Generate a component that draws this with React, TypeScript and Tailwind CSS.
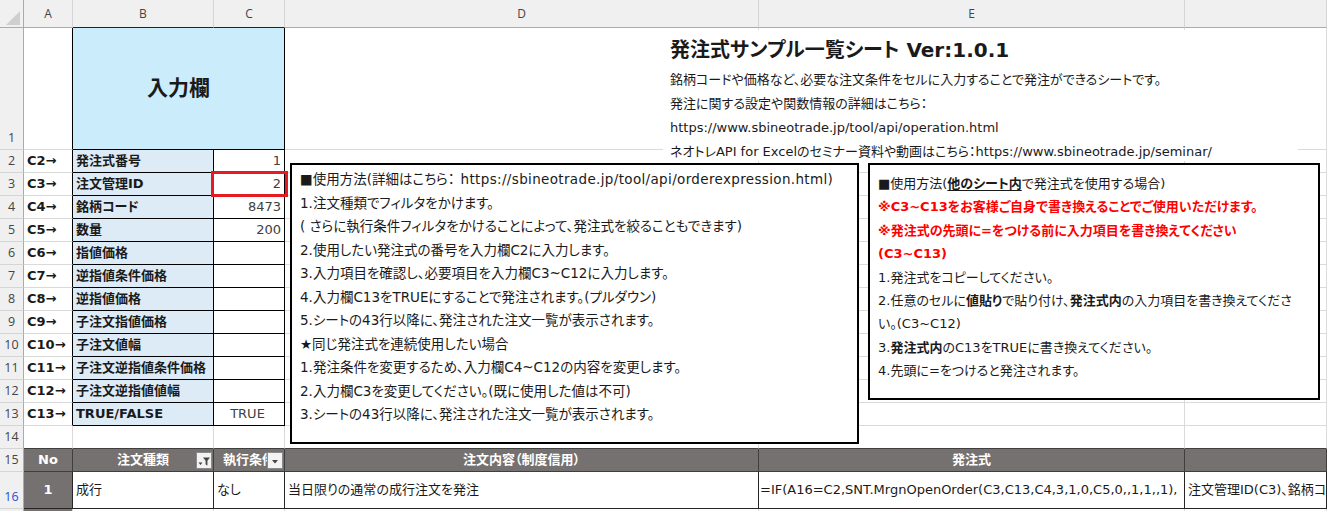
import React from 'react';

const font = "font-['DejaVu_Sans','Noto_Sans_CJK_JP',sans-serif] [font-feature-settings:'palt']";

const cols = ['A', 'B', 'C', 'D', 'E', ''];

const inputs = [
  ['C2→', '発注式番号', '1'],
  ['C3→', '注文管理ID', '2'],
  ['C4→', '銘柄コード', '8473'],
  ['C5→', '数量', '200'],
  ['C6→', '指値価格', ''],
  ['C7→', '逆指値条件価格', ''],
  ['C8→', '逆指値価格', ''],
  ['C9→', '子注文指値価格', ''],
  ['C10→', '子注文値幅', ''],
  ['C11→', '子注文逆指値条件価格', ''],
  ['C12→', '子注文逆指値値幅', ''],
  ['C13→', 'TRUE/FALSE', 'TRUE'],
];

const usage = [
  '1.注文種類でフィルタをかけます。',
  '( さらに執行条件フィルタをかけることによって、発注式を絞ることもできます)',
  '2.使用したい発注式の番号を入力欄C2に入力します。',
  '3.入力項目を確認し、必要項目を入力欄C3~C12に入力します。',
  '4.入力欄C13をTRUEにすることで発注されます。(プルダウン)',
  '5.シートの43行以降に、発注された注文一覧が表示されます。',
  '★同じ発注式を連続使用したい場合',
  '1.発注条件を変更するため、入力欄C4~C12の内容を変更します。',
  '2.入力欄C3を変更してください。(既に使用した値は不可)',
  '3.シートの43行以降に、発注された注文一覧が表示されます。',
];

function RowHead({ n, blue }: { n?: number; blue?: boolean }) {
  return (
    <div
      className={`flex items-end justify-center border-r border-b border-r-[#ABABAB] border-b-[#D5D5D5] bg-[#F0F0F0] pb-[1px] font-['Open_Sans',sans-serif] text-[12.5px] leading-[20px] ${
        blue ? 'text-[#1F4FD8]' : 'text-[#444]'
      }`}
    >
      {n}
    </div>
  );
}

function Cell({ className = '', children }: { className?: string; children?: React.ReactNode }) {
  return (
    <div className={`flex items-center overflow-hidden whitespace-nowrap border-r border-b text-[13px] ${className}`}>
      {children}
    </div>
  );
}

function FilterButton() {
  return (
    <div className="absolute right-[1px] top-[3px] flex h-[17px] w-[16px] items-center justify-center border border-[#8A8A8A] bg-[#F3F3F3]">
      <svg width="14" height="14" viewBox="0 0 14 14">
        <path d="M1.5 8.5h4l-2 2.5z" fill="#444" />
        <path d="M6 3.5h7l-2.6 3.2v4.8l-1.8-1v-3.8z" fill="#444" />
      </svg>
    </div>
  );
}

function DropButton() {
  return (
    <div className="absolute right-[1px] top-[3px] flex h-[17px] w-[16px] items-center justify-center border border-[#8A8A8A] bg-[#F3F3F3]">
      <svg width="10" height="10" viewBox="0 0 10 10">
        <path d="M2 4h6l-3 3.5z" fill="#444" />
      </svg>
    </div>
  );
}

export default function App() {
  return (
    <div className={`relative h-[511px] w-[1327px] overflow-hidden bg-white text-[#1a1a1a] ${font}`}>
      <div className="grid grid-cols-[24px_49px_141px_71px_474px_426px_142px] grid-rows-[28px_122px_repeat(14,23px)_37px_23px]">
        {/* column headers */}
        <div className="relative border-r border-b border-r-[#ABABAB] border-b-[#ABABAB] bg-[#F0F0F0]">
          <svg className="absolute left-0 top-0" width="24" height="28" viewBox="0 0 24 28">
            <path d="M6 25h14V11z" fill="#CFCFCF" />
          </svg>
        </div>
        {cols.map((c, i) => (
          <div
            key={i}
            className={`flex items-center justify-center border-r border-b border-r-[#D5D5D5] bg-[#F0F0F0] font-['Open_Sans',sans-serif] text-[12px] text-[#444] ${
              c === 'B' || c === 'C' ? 'border-b-[#222]' : 'border-b-[#ABABAB]'
            }`}
          >
            {c}
          </div>
        ))}

        {/* row 1 */}
        <RowHead n={1} />
        <Cell className="border-r-black border-b-[#DADADA]" />
        <div className="col-span-2 flex items-center justify-center border-r border-b border-black bg-[#CBEDFB] text-[21px] font-bold">
          入力欄
        </div>
        <Cell className="border-[#DADADA]" />
        <Cell className="border-[#DADADA]" />
        <Cell className="border-[#DADADA]" />

        {/* rows 2-13 */}
        {inputs.map(([a, b, c], i) => (
          <React.Fragment key={a}>
            <RowHead n={i + 2} />
            <Cell className="border-r-black border-b-[#DADADA] pl-[3px] font-bold">{a}</Cell>
            <Cell className="border-black bg-[#DDEBF7] pl-[3px] font-bold">{b}</Cell>
            <Cell
              className={`border-black pr-[3px] text-[#404040] ${
                c === 'TRUE' ? 'justify-center text-[#5A5045]' : 'justify-end'
              }`}
            >
              {c}
            </Cell>
            <Cell className="border-[#DADADA]" />
            <Cell className="border-[#DADADA]" />
            <Cell className="border-[#DADADA]" />
          </React.Fragment>
        ))}

        {/* row 14 */}
        <RowHead n={14} />
        <Cell className="border-r-[#DADADA] border-b-[#3F3F3F]" />
        <Cell className="border-r-[#DADADA] border-b-[#3F3F3F]" />
        <Cell className="border-r-[#DADADA] border-b-[#3F3F3F]" />
        <Cell className="border-r-[#DADADA] border-b-[#3F3F3F]" />
        <Cell className="border-r-[#DADADA] border-b-[#3F3F3F]" />
        <Cell className="border-r-[#DADADA] border-b-[#3F3F3F]" />

        {/* row 15 */}
        <RowHead n={15} />
        <Cell className="justify-center border-[#3F3F3F] bg-[#767171] font-bold text-white">No</Cell>
        <Cell className="relative justify-center border-[#3F3F3F] bg-[#767171] font-bold text-white">
          注文種類
          <FilterButton />
        </Cell>
        <Cell className="relative justify-center border-[#3F3F3F] bg-[#767171] font-bold text-white">
          執行条件
          <DropButton />
        </Cell>
        <Cell className="justify-center border-[#3F3F3F] bg-[#767171] font-bold text-white">注文内容（制度信用）</Cell>
        <Cell className="justify-center border-[#3F3F3F] bg-[#767171] font-bold text-white">発注式</Cell>
        <Cell className="border-[#3F3F3F] bg-[#767171]" />

        {/* row 16 */}
        <RowHead n={16} blue />
        <Cell className="justify-center border-[#262626] bg-[#767171] font-bold text-white">1</Cell>
        <Cell className="border-[#262626] pl-[3px]">成行</Cell>
        <Cell className="border-[#262626] pl-[3px]">なし</Cell>
        <Cell className="border-[#262626] pl-[3px]">当日限りの通常の成行注文を発注</Cell>
        <Cell className="border-[#262626] pl-[1px]">=IF(A16=C2,SNT.MrgnOpenOrder(C3,C13,C4,3,1,0,C5,0,,1,1,,1),</Cell>
        <Cell className="border-[#262626] pl-[3px]">注文管理ID(C3)、銘柄コ</Cell>

        {/* row 17 */}
        <RowHead />
        <Cell className="border-[#DADADA] bg-[#767171]" />
        <Cell className="border-[#DADADA]" />
        <Cell className="border-[#DADADA]" />
        <Cell className="border-[#DADADA]" />
        <Cell className="border-[#DADADA]" />
        <Cell className="border-[#DADADA]" />
      </div>

      {/* C3 highlight */}
      <div className="absolute left-[211px] top-[171px] h-[26px] w-[77px] border-[3px] border-[#E41B23]" />

      {/* title block */}
      <div className="absolute left-[663px] top-[30px] h-[131px] w-[635px] bg-white pl-[7px] pt-[5px]">
        <div className="h-[30px] text-[20px] font-bold leading-[30px] whitespace-nowrap">発注式サンプル一覧シート Ver:1.0.1</div>
        <div className="mt-[3px] text-[13px] leading-[24px] whitespace-nowrap">
          <div>銘柄コードや価格など、必要な注文条件をセルに入力することで発注ができるシートです。</div>
          <div>発注に関する設定や関数情報の詳細はこちら：</div>
          <div>https://www.sbineotrade.jp/tool/api/operation.html</div>
          <div>ネオトレAPI for Excelのセミナー資料や動画はこちら：https://www.sbineotrade.jp/seminar/</div>
        </div>
      </div>

      {/* usage box */}
      <div className="absolute left-[290px] top-[163px] h-[281px] w-[569px] border-2 border-black bg-white pl-[8px] pt-[3px] text-[13.5px] leading-[23.5px] whitespace-nowrap">
        <div>
          ■使用方法(詳細はこちら：
          <span className="ml-[6px] tracking-[0.35px]">https://sbineotrade.jp/tool/api/orderexpression.html)</span>
        </div>
        {usage.map((l, i) => (
          <div key={i}>{l}</div>
        ))}
      </div>

      {/* other sheet box */}
      <div className="absolute left-[868px] top-[163px] h-[237px] w-[452px] border-2 border-black bg-white pl-[8px] pt-[7px] text-[13px] leading-[23.4px] whitespace-nowrap">
        <div>
          ■使用方法(<span className="font-bold underline underline-offset-2">他のシート内</span>で発注式を使用する場合)
        </div>
        <div className="font-bold text-[#FF0000]">※C3~C13をお客様ご自身で書き換えることでご使用いただけます。</div>
        <div className="font-bold text-[#FF0000]">※発注式の先頭に=をつける前に入力項目を書き換えてください</div>
        <div className="font-bold text-[#FF0000]">(C3~C13)</div>
        <div>1.発注式をコピーしてください。</div>
        <div>
          2.任意のセルに<span className="font-bold">値貼り</span>で貼り付け、<span className="font-bold">発注式内</span>の入力項目を書き換えてくださ
        </div>
        <div>い。(C3~C12)</div>
        <div>
          3.<span className="font-bold">発注式内</span>のC13をTRUEに書き換えてください。
        </div>
        <div>4.先頭に=をつけると発注されます。</div>
      </div>
    </div>
  );
}
